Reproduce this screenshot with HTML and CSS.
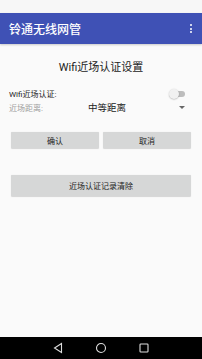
FILE: index.html
```html
<!DOCTYPE html>
<html>
<head>
<meta charset="utf-8">
<link rel="stylesheet" href="styles.css">
</head>
<body>
<div class="screen">
  <div class="status"></div>
  <div class="appbar">
    <span class="apptitle">铃通无线网管</span>
    <span class="menu"><i></i><i></i><i></i></span>
  </div>
  <div class="content">
    <div class="heading">Wifi近场认证设置</div>
    <div class="row">
      <span class="label">Wifi近场认证:</span>
      <span class="switch"><span class="track"></span><span class="thumb"></span></span>
    </div>
    <div class="row row2">
      <span class="label gray">近场距离:</span>
      <span class="value">中等距离</span>
      <span class="caret"></span>
    </div>
    <div class="btns">
      <div class="btn">确认</div>
      <div class="btn">取消</div>
    </div>
    <div class="btn wide">近场认证记录清除</div>
  </div>
  <div class="nav">
    <svg width="12" height="12" viewBox="0 0 12 12"><path d="M9.5 1.5 L2.5 6 L9.5 10.5 Z" fill="none" stroke="#ddd" stroke-width="1.1"/></svg>
    <svg width="12" height="12" viewBox="0 0 12 12"><circle cx="6" cy="6" r="4.5" fill="none" stroke="#ddd" stroke-width="1.1"/></svg>
    <svg width="12" height="12" viewBox="0 0 12 12"><rect x="2" y="2" width="8" height="8" rx="0.8" fill="none" stroke="#ddd" stroke-width="1.1"/></svg>
  </div>
</div>
</body>
</html>
```
FILE: styles.css
```css
html, body { margin: 0; padding: 0; }
body { width: 202px; height: 359px; overflow: hidden; background: #fafafa; font-family: Roboto, "Noto Sans CJK SC", sans-serif; }
.screen { width: 202px; height: 359px; display: flex; flex-direction: column; }
.status { height: 13px; background: #f7f7f7; }
.appbar { height: 31px; background: #3f51b5; display: flex; align-items: center; justify-content: space-between; padding: 0 9px; box-shadow: 0 1px 2px rgba(0,0,0,0.2); }
.apptitle { color: #fff; font-size: 12px; font-weight: 500; }
.menu { display: flex; flex-direction: column; gap: 1.5px; margin-right: 1px; }
.menu i { width: 2px; height: 2px; background: #fff; display: block; border-radius: 1px; }
.content { flex: 1; padding: 0 11px; display: flex; flex-direction: column; }
.heading { text-align: center; font-size: 11px; color: #222; margin-top: 17px; line-height: 14px; }
.row { display: flex; align-items: center; height: 13px; margin-top: 12px; margin-left: -2px; }
.row2 { margin-top: 0; height: 14px; }
.label { font-size: 8px; color: #222; }
.gray { color: #a0a0a0; }
.switch { margin-left: auto; margin-right: 5px; position: relative; width: 17px; height: 10px; }
.track { position: absolute; left: 3px; top: 2px; width: 13px; height: 6px; border-radius: 3px; background: #bdbdbd; }
.thumb { position: absolute; left: 0; top: 0; width: 10px; height: 10px; border-radius: 50%; background: #f1f1f1; box-shadow: 0 0.5px 1.5px rgba(0,0,0,0.3); }
.value { font-size: 9.5px; color: #222; margin-left: 45px; }
.caret { margin-left: auto; margin-right: 6px; width: 0; height: 0; border-left: 3px solid transparent; border-right: 3px solid transparent; border-top: 3px solid #666; }
.btns { display: flex; gap: 4px; margin-top: 18px; }
.btn { flex: 1; height: 16px; background: #d6d7d7; border-radius: 1px; box-shadow: 0 0.5px 1px rgba(0,0,0,0.15); display: flex; align-items: center; justify-content: center; font-size: 8px; color: #222; }
.wide { flex: none; height: 21px; margin-top: 27px; }
.nav { height: 22px; background: #000; display: flex; justify-content: center; align-items: center; gap: 31px; }
```
